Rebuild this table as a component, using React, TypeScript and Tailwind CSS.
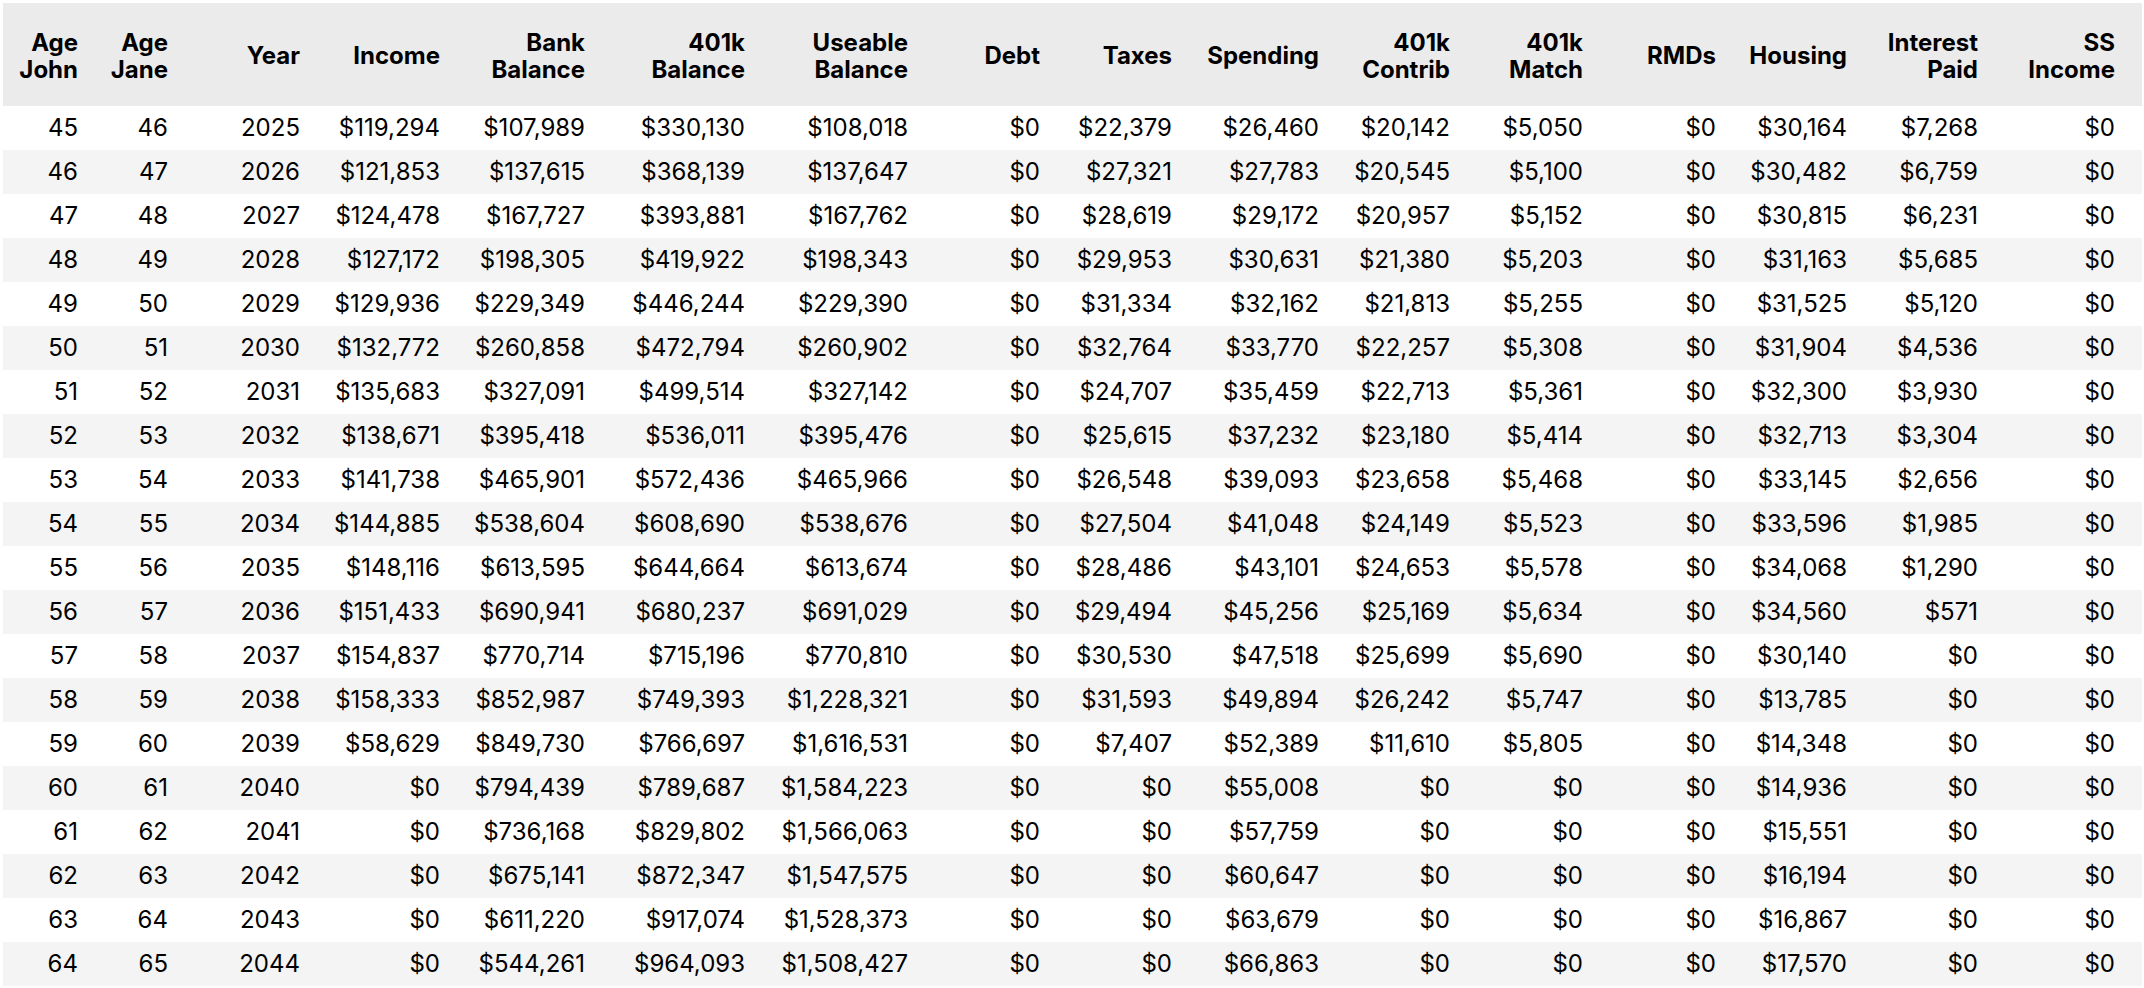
import React from 'react'

const HEADERS: string[][] = [
  ['Age', 'John'],
  ['Age', 'Jane'],
  ['Year'],
  ['Income'],
  ['Bank', 'Balance'],
  ['401k', 'Balance'],
  ['Useable', 'Balance'],
  ['Debt'],
  ['Taxes'],
  ['Spending'],
  ['401k', 'Contrib'],
  ['401k', 'Match'],
  ['RMDs'],
  ['Housing'],
  ['Interest', 'Paid'],
  ['SS', 'Income'],
]

const ROWS: string[][] = [
  ['45', '46', '2025', '$119,294', '$107,989', '$330,130', '$108,018', '$0', '$22,379', '$26,460', '$20,142', '$5,050', '$0', '$30,164', '$7,268', '$0'],
  ['46', '47', '2026', '$121,853', '$137,615', '$368,139', '$137,647', '$0', '$27,321', '$27,783', '$20,545', '$5,100', '$0', '$30,482', '$6,759', '$0'],
  ['47', '48', '2027', '$124,478', '$167,727', '$393,881', '$167,762', '$0', '$28,619', '$29,172', '$20,957', '$5,152', '$0', '$30,815', '$6,231', '$0'],
  ['48', '49', '2028', '$127,172', '$198,305', '$419,922', '$198,343', '$0', '$29,953', '$30,631', '$21,380', '$5,203', '$0', '$31,163', '$5,685', '$0'],
  ['49', '50', '2029', '$129,936', '$229,349', '$446,244', '$229,390', '$0', '$31,334', '$32,162', '$21,813', '$5,255', '$0', '$31,525', '$5,120', '$0'],
  ['50', '51', '2030', '$132,772', '$260,858', '$472,794', '$260,902', '$0', '$32,764', '$33,770', '$22,257', '$5,308', '$0', '$31,904', '$4,536', '$0'],
  ['51', '52', '2031', '$135,683', '$327,091', '$499,514', '$327,142', '$0', '$24,707', '$35,459', '$22,713', '$5,361', '$0', '$32,300', '$3,930', '$0'],
  ['52', '53', '2032', '$138,671', '$395,418', '$536,011', '$395,476', '$0', '$25,615', '$37,232', '$23,180', '$5,414', '$0', '$32,713', '$3,304', '$0'],
  ['53', '54', '2033', '$141,738', '$465,901', '$572,436', '$465,966', '$0', '$26,548', '$39,093', '$23,658', '$5,468', '$0', '$33,145', '$2,656', '$0'],
  ['54', '55', '2034', '$144,885', '$538,604', '$608,690', '$538,676', '$0', '$27,504', '$41,048', '$24,149', '$5,523', '$0', '$33,596', '$1,985', '$0'],
  ['55', '56', '2035', '$148,116', '$613,595', '$644,664', '$613,674', '$0', '$28,486', '$43,101', '$24,653', '$5,578', '$0', '$34,068', '$1,290', '$0'],
  ['56', '57', '2036', '$151,433', '$690,941', '$680,237', '$691,029', '$0', '$29,494', '$45,256', '$25,169', '$5,634', '$0', '$34,560', '$571', '$0'],
  ['57', '58', '2037', '$154,837', '$770,714', '$715,196', '$770,810', '$0', '$30,530', '$47,518', '$25,699', '$5,690', '$0', '$30,140', '$0', '$0'],
  ['58', '59', '2038', '$158,333', '$852,987', '$749,393', '$1,228,321', '$0', '$31,593', '$49,894', '$26,242', '$5,747', '$0', '$13,785', '$0', '$0'],
  ['59', '60', '2039', '$58,629', '$849,730', '$766,697', '$1,616,531', '$0', '$7,407', '$52,389', '$11,610', '$5,805', '$0', '$14,348', '$0', '$0'],
  ['60', '61', '2040', '$0', '$794,439', '$789,687', '$1,584,223', '$0', '$0', '$55,008', '$0', '$0', '$0', '$14,936', '$0', '$0'],
  ['61', '62', '2041', '$0', '$736,168', '$829,802', '$1,566,063', '$0', '$0', '$57,759', '$0', '$0', '$0', '$15,551', '$0', '$0'],
  ['62', '63', '2042', '$0', '$675,141', '$872,347', '$1,547,575', '$0', '$0', '$60,647', '$0', '$0', '$0', '$16,194', '$0', '$0'],
  ['63', '64', '2043', '$0', '$611,220', '$917,074', '$1,528,373', '$0', '$0', '$63,679', '$0', '$0', '$0', '$16,867', '$0', '$0'],
  ['64', '65', '2044', '$0', '$544,261', '$964,093', '$1,508,427', '$0', '$0', '$66,863', '$0', '$0', '$0', '$17,570', '$0', '$0'],
]

// column widths picked so the right-aligned text lands where the reference has it
const GRID =
  'grid grid-cols-[105px_90px_132px_140px_145px_160px_163px_132px_132px_147px_131px_133px_133px_131px_131px_134px]'

export default function App() {
  return (
    <div className="min-h-screen bg-white pl-[3px] pt-[3px] text-black font-['Inter',sans-serif]">
      <div className="w-[2139px]">
        <div className={`${GRID} h-[103px] bg-[#ebebeb] text-[24px] font-bold leading-[27px]`}>
          {HEADERS.map((lines, i) => (
            <div
              key={i}
              className={`flex flex-col items-end justify-center pt-[2px] text-right ${
                i === HEADERS.length - 1 ? 'pr-[27px]' : 'pr-[30px]'
              }`}
            >
              {lines.map((l) => (
                <span key={l}>{l}</span>
              ))}
            </div>
          ))}
        </div>
        {ROWS.map((row, r) => (
          <div
            key={r}
            className={`${GRID} h-[44px] items-center text-[24px] ${r % 2 === 1 ? 'bg-[#f4f4f4]' : 'bg-white'}`}
          >
            {row.map((cell, c) => (
              <div
                key={c}
                className={`text-right whitespace-nowrap ${c === row.length - 1 ? 'pr-[27px]' : 'pr-[30px]'}`}
              >
                {cell}
              </div>
            ))}
          </div>
        ))}
      </div>
    </div>
  )
}
